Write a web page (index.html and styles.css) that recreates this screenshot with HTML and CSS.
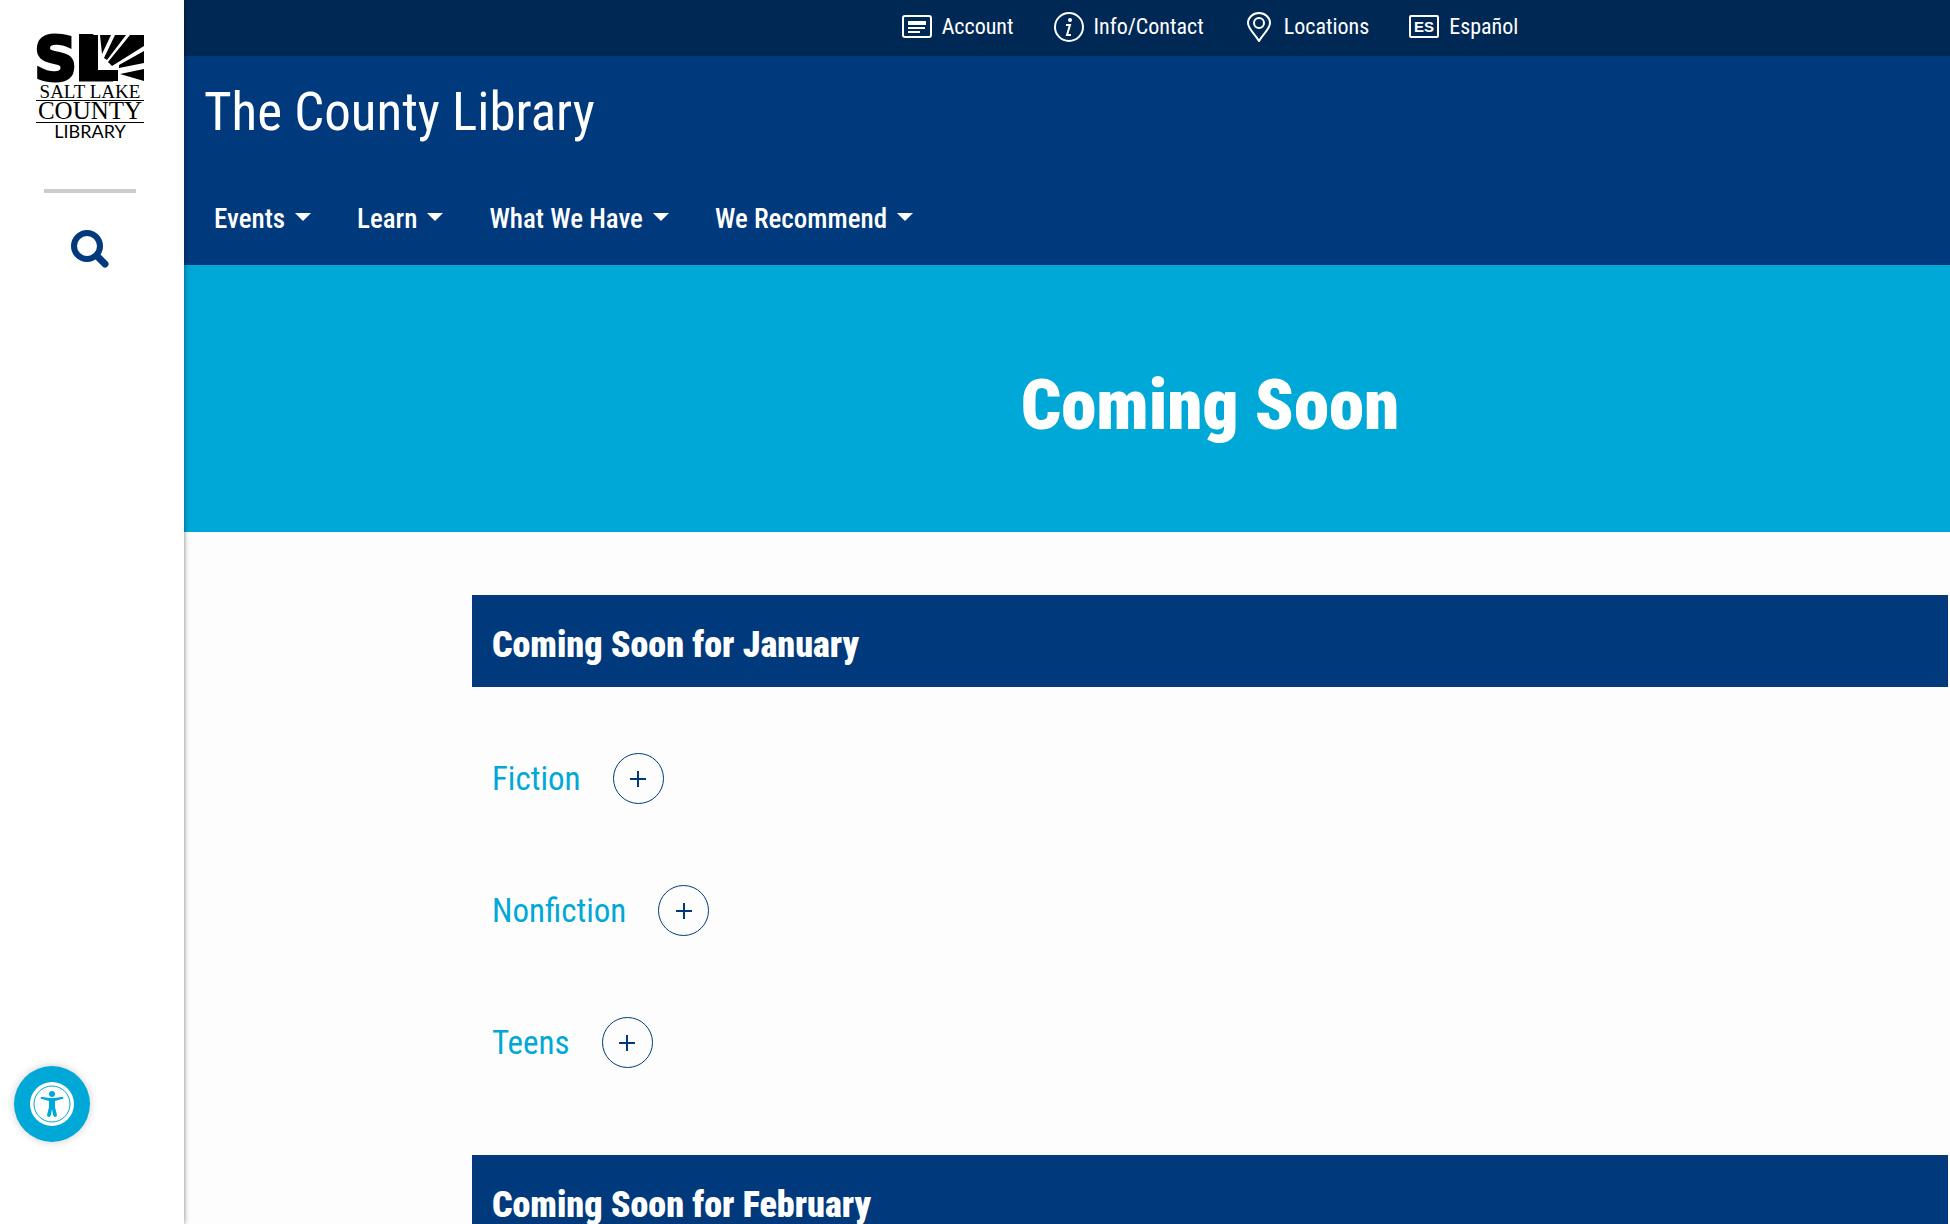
FILE: index.html
```html
<!DOCTYPE html>
<html lang="en">
<head>
<meta charset="utf-8">
<meta name="viewport" content="width=device-width, initial-scale=1">
<title>Coming Soon | The County Library</title>
<link rel="stylesheet" href="styles.css">
</head>
<body>
<div class="shell">
  <aside class="rail">
    <a class="logo" href="#" aria-label="Salt Lake County Library">
      <svg width="122" height="126" viewBox="-6 -16 122 126">
        <text class="logo-mark" x="-1" y="46">S</text>
        <text class="logo-mark" x="40" y="46">L</text>
        <path d="M65 1h11L67 20zM80 1h11L72 26l-3-2zM95 1h14v11L77 32l-4-4zM109 17v12L84 34v-3zM85 40l24-5v12zM77 36h6v11h-6zM55 1h8v46h-8z"/>
        <text class="logo-serif" x="55" y="64" font-size="19" text-anchor="middle">SALT LAKE</text>
        <path d="M1 66h108v1H1zM1 88h108v1H1z"/>
        <text class="logo-serif" x="55" y="85" font-size="25" text-anchor="middle">COUNTY</text>
        <text class="logo-sans" x="55" y="104" text-anchor="middle">LIBRARY</text>
      </svg>
    </a>
    <hr class="rail-rule">
    <button class="search" type="button" aria-label="Search">
      <svg width="40" height="40" viewBox="0 0 40 40" fill="none" stroke="currentColor">
        <circle cx="17" cy="17" r="13" stroke-width="6"/>
        <path d="M28 28l7 7" stroke-width="7" stroke-linecap="round"/>
      </svg>
    </button>
  </aside>

  <div class="page">
    <nav class="topbar" aria-label="Utility">
      <a href="#"><svg width="30" height="30" viewBox="0 0 30 30" fill="none" stroke="currentColor"><rect x="1" y="4" width="28" height="21" rx="2" stroke-width="2"/><path d="M6 11h18" stroke-width="4"/><path d="M6 16h17M6 20h12" stroke-width="2"/></svg>Account</a>
      <a href="#"><svg width="30" height="30" viewBox="0 0 30 30" fill="none" stroke="currentColor"><circle cx="15" cy="15" r="14" stroke-width="2"/><circle cx="16" cy="8" r="2" fill="currentColor" stroke="none"/><path d="M12 13h4l-3 10h4" stroke-width="2"/></svg>Info/Contact</a>
      <a href="#"><svg width="30" height="30" viewBox="0 0 30 30" fill="none" stroke="currentColor" stroke-width="2"><path d="M15 29C11 22 4 17 4 11a11 10 0 0 1 22 0c0 6-7 11-11 18z"/><circle cx="15" cy="11" r="5"/></svg>Locations</a>
      <a href="#"><svg width="30" height="30" viewBox="0 0 30 30"><rect x="1" y="4" width="28" height="21" rx="1" fill="none" stroke="currentColor" stroke-width="2"/><text class="es" x="15" y="20" text-anchor="middle">ES</text></svg>Español</a>
    </nav>

    <header class="masthead">
      <a class="brand" href="#">The County Library</a>
      <nav class="menu" aria-label="Main">
        <button type="button">Events</button>
        <button type="button">Learn</button>
        <button type="button">What We Have</button>
        <button type="button">We Recommend</button>
      </nav>
    </header>

    <section class="hero"><h1>Coming Soon</h1></section>

    <main class="content">
      <h2>Coming Soon for January</h2>
      <div class="genres">
        <div class="genre"><h3>Fiction</h3><button type="button" aria-label="Show Fiction"><svg width="18" height="18" viewBox="0 0 18 18"><path d="M1 9h16M9 1v16"/></svg></button></div>
        <div class="genre"><h3>Nonfiction</h3><button type="button" aria-label="Show Nonfiction"><svg width="18" height="18" viewBox="0 0 18 18"><path d="M1 9h16M9 1v16"/></svg></button></div>
        <div class="genre"><h3>Teens</h3><button type="button" aria-label="Show Teens"><svg width="18" height="18" viewBox="0 0 18 18"><path d="M1 9h16M9 1v16"/></svg></button></div>
      </div>
      <h2>Coming Soon for February</h2>
    </main>
  </div>
</div>

<button class="a11y" type="button" aria-label="Accessibility options">
  <svg width="44" height="44" viewBox="0 0 44 44">
    <circle cx="22" cy="22" r="22" fill="#fff"/>
    <circle cx="22" cy="22" r="18" fill="none" stroke="#00a8d8" stroke-width="1"/>
    <g fill="#00a8d8"><circle cx="22" cy="12" r="3"/><path d="M11 15q-1 2 1 2l7 2v6l-2 8q0 2 2 2 1 0 2-2l1-6 1 6q1 2 2 2 2 0 2-2l-2-8v-6l7-2q2 0 1-2-1 0-2 0-9 2-18 0z"/></g>
  </svg>
</button>
</body>
</html>
```

FILE: styles.css
```css
:root {
  --navy: #003a7d;
  --midnight: #002855;
  --sky: #00a8d8;
}

* { box-sizing: border-box; }

body {
  margin: 0;
  background: #fdfdfd;
  font-family: "Roboto Condensed", "Arial Narrow", Roboto, sans-serif;
}

button {
  padding: 0;
  border: 0;
  background: none;
  font-family: inherit;
  cursor: pointer;
}

h1, h2, h3 { margin: 0; }
a { color: inherit; text-decoration: none; }
svg { display: block; flex: none; }

.shell {
  display: flex;
  height: 100vh;
  overflow: hidden;
}

/* Left rail */
.rail {
  position: relative;
  z-index: 1;
  flex: none;
  display: flex;
  flex-direction: column;
  align-items: center;
  width: 184px;
  padding: 18px 5px 0 0;
  background: #fff;
  box-shadow: 0 0 5px rgba(0, 0, 0, 0.5);
}

.logo-mark {
  font: bold 60px "DejaVu Sans", sans-serif;
  stroke: #000;
  stroke-width: 3px;
}
.logo-serif { font-family: "Liberation Serif", serif; }
.logo-sans { font: 18px Lato, sans-serif; }

.rail-rule {
  width: 92px;
  height: 4px;
  margin: 45px 0 36px;
  border: 0;
  background: #ccc;
}

.search { color: var(--navy); }

/* Page column */
.page {
  flex: 1;
  min-width: 0;
}

.topbar {
  display: flex;
  justify-content: center;
  gap: 40px;
  height: 56px;
  padding: 0 2px 3px 288px;
  background: var(--midnight);
  color: #fff;
  font-size: 22px;
}
.topbar a {
  display: flex;
  align-items: center;
  gap: 10px;
}
.es {
  font: bold 15px "Liberation Sans", sans-serif;
  fill: currentColor;
}

.masthead {
  padding: 24px 20px;
  height: 209px;
  background: var(--navy);
  color: #fff;
}
.brand {
  display: block;
  font-size: 53px;
  line-height: 64px;
}
.menu {
  display: flex;
  gap: 46px;
  padding: 57px 10px 0;
}
.menu button {
  display: flex;
  align-items: center;
  gap: 10px;
  color: #fff;
  font-size: 27px;
  font-weight: 500;
  line-height: 36px;
}
.menu button::after {
  content: "";
  margin-bottom: 4px;
  border: 8px solid transparent;
  border-top-color: #fff;
  border-bottom: 0;
}

.hero {
  padding: 100px 2px 87px 288px;
  background: var(--sky);
  color: #fff;
  text-align: center;
}
.hero h1 {
  font-size: 71px;
  font-weight: 900;
  line-height: 80px;
}

.content { padding: 63px 2px 0 288px; }
.content h2 {
  padding: 26px 20px 18px;
  background: var(--navy);
  color: #fff;
  font-size: 36px;
  font-weight: 900;
  line-height: 48px;
}

.genres {
  display: grid;
  gap: 81px;
  padding: 66px 20px 87px;
}
.genre {
  display: flex;
  align-items: center;
  gap: 32px;
}
.genre h3 {
  color: var(--sky);
  font-size: 33px;
  font-weight: normal;
  line-height: 48px;
}
.genre button {
  display: grid;
  place-items: center;
  width: 51px;
  height: 51px;
  border: 1px solid var(--navy);
  border-radius: 50%;
}
.genre path {
  stroke: var(--navy);
  stroke-width: 2;
}

/* Floating accessibility button */
.a11y {
  position: fixed;
  z-index: 2;
  bottom: 82px;
  left: 14px;
  display: grid;
  place-items: center;
  width: 76px;
  height: 76px;
  border-radius: 50%;
  background: var(--sky);
  box-shadow: 0 0 8px rgba(0, 0, 0, 0.2);
}
```
